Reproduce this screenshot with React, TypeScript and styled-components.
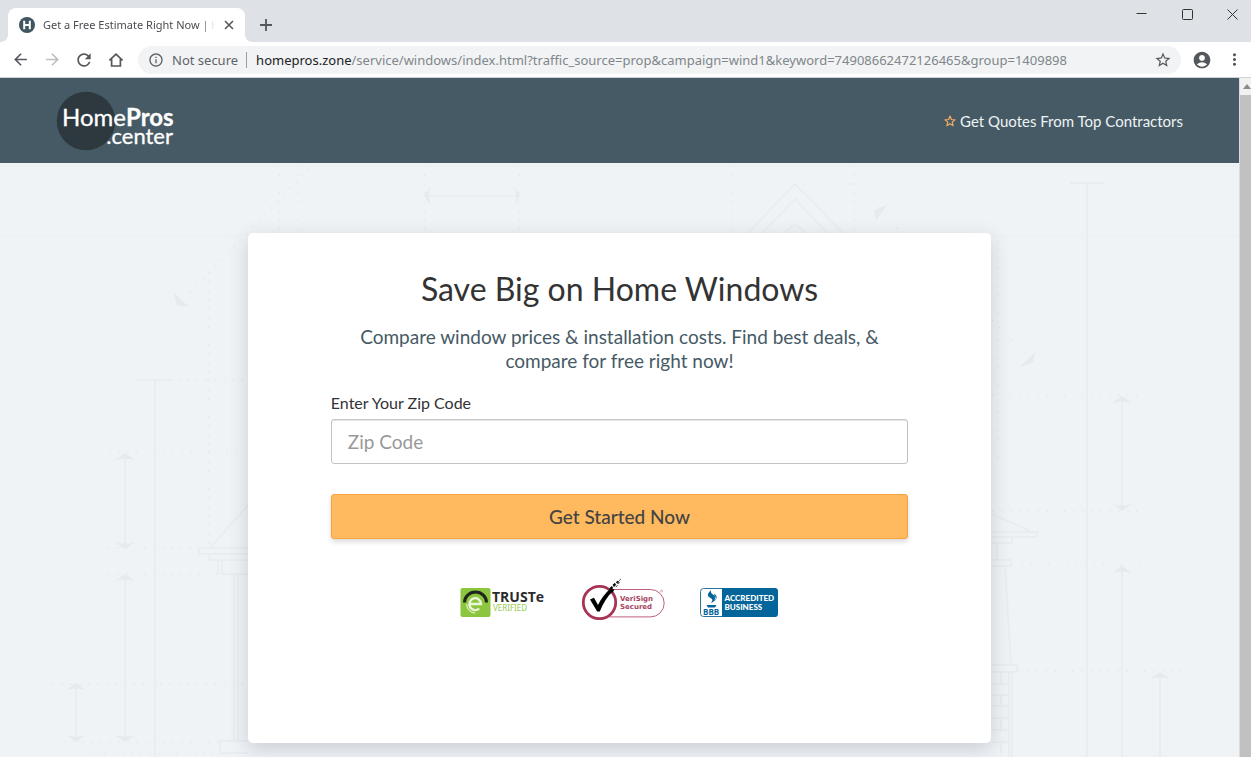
import React from "react";
import styled, { createGlobalStyle, css } from "styled-components";
import {
  MdArrowBack,
  MdArrowForward,
  MdRefresh,
  MdInfoOutline,
  MdStarBorder,
  MdAccountCircle,
  MdMoreVert,
} from "react-icons/md";

const uiFont = `"Noto Sans", "Open Sans", sans-serif`;
const siteFont = `Lato, "Open Sans", sans-serif`;

const GlobalStyle = createGlobalStyle`
  *, *::before, *::after { box-sizing: border-box; }
  body { margin: 0; background: #eff3f6; font-family: ${siteFont}; font-variant-ligatures: none; }
  h1, p { margin: 0; font-weight: 400; }
  button { font-family: inherit; cursor: pointer; }
  svg { display: block; }
`;

const BrowserWindow = styled.div`
  display: flex;
  flex-direction: column;
  height: 100vh;
  overflow: hidden;
`;

/* ---------- tab strip ---------- */

const TabStrip = styled.header`
  display: flex;
  align-items: flex-start;
  height: 42px;
  padding-left: 8px;
  background: #dee1e6;
  font-family: ${uiFont};
`;

const foot = css`
  content: "";
  position: absolute;
  bottom: 0;
  width: 8px;
  height: 8px;
`;

const Tab = styled.div`
  position: relative;
  display: flex;
  align-items: center;
  width: 237px;
  height: 34px;
  margin-top: 8px;
  padding: 0 8px 0 11px;
  border-radius: 8px 8px 0 0;
  background: #fff;

  &::before {
    ${foot}
    left: -8px;
    background: radial-gradient(circle at 0 0, transparent 8px, #fff 8px);
  }
  &::after {
    ${foot}
    right: -8px;
    background: radial-gradient(circle at 100% 0, transparent 8px, #fff 8px);
  }
`;

const TabTitle = styled.span`
  flex: 1;
  margin: 0 6px 0 8px;
  overflow: hidden;
  white-space: nowrap;
  font-size: 11px;
  line-height: 16px;
  color: #4a4d51;
  mask-image: linear-gradient(to right, #000 92%, transparent);
`;

const IconButton = styled.button<{ $w?: number; $h?: number; $faded?: boolean }>`
  display: flex;
  flex: none;
  align-items: center;
  justify-content: center;
  width: ${(p) => p.$w ?? 32}px;
  height: ${(p) => p.$h ?? 36}px;
  padding: 0;
  border: 0;
  background: none;
  color: ${(p) => (p.$faded ? "#bcbec1" : "#54575b")};
`;

const WindowControls = styled.div`
  display: flex;
  margin-left: auto;
`;

/* ---------- address row ---------- */

const Toolbar = styled.nav`
  display: flex;
  align-items: center;
  height: 36px;
  padding: 0 1px 0 4px;
  border-bottom: 1px solid #ccd2d6;
  background: #fff;
  font-family: ${uiFont};
`;

const AddressBar = styled.div`
  display: flex;
  flex: 1;
  align-items: center;
  min-width: 0;
  height: 28px;
  margin: 0 5px 0 6px;
  padding: 0 2px 0 10px;
  border-radius: 14px;
  background: #f1f3f4;
  color: #5f6368;
  font-size: 13px;
  line-height: 20px;
`;

const Security = styled.span`
  margin-left: 8px;
  padding-right: 8px;
  white-space: nowrap;
`;

const Divider = styled.span`
  width: 1px;
  height: 16px;
  margin-right: 9px;
  background: #9a9da1;
`;

const Url = styled.div`
  flex: 1;
  min-width: 0;
  overflow: hidden;
  white-space: nowrap;
  color: #80868b;

  b {
    font-weight: 400;
    color: #202124;
  }
`;

/* ---------- page ---------- */

const Viewport = styled.div`
  display: flex;
  flex: 1;
  min-height: 0;
`;

const Page = styled.div`
  display: flex;
  flex: 1;
  flex-direction: column;
  min-width: 0;
  overflow: hidden;
`;

const Scrollbar = styled.div`
  display: flex;
  flex: none;
  flex-direction: column;
  width: 12px;
  border-left: 1px solid #dcdcdc;
  background: #f1f1f1;
`;

const ScrollUp = styled.div`
  display: flex;
  align-items: center;
  justify-content: flex-end;
  height: 17px;
`;

const ScrollThumb = styled.div`
  flex: 1;
  background: #c1c1c1;
`;

const SiteHeader = styled.header`
  display: flex;
  flex: none;
  align-items: center;
  justify-content: space-between;
  height: 85px;
  padding: 0 56px;
  background: #465a65;
`;

const Tagline = styled.p`
  display: flex;
  align-items: center;
  gap: 4px;
  color: #eef3f5;
  font-size: 15px;
  line-height: 24px;
`;

const Hero = styled.main`
  position: relative;
  flex: 1;
  padding-top: 70px;
  background: #eff3f6;
`;

const Blueprint = styled.svg`
  position: absolute;
  inset: 0;
  width: 100%;
  height: 100%;
`;

const Card = styled.section`
  position: relative;
  display: flex;
  flex-direction: column;
  align-items: center;
  width: 60%;
  min-height: 510px;
  margin: 0 auto;
  padding: 36px 83px 40px;
  border-radius: 5px;
  background: #fff;
  box-shadow: 0 6px 20px rgba(50, 60, 80, 0.2);
`;

const Title = styled.h1`
  color: #333;
  font-size: 32px;
  line-height: 40px;
`;

const Lead = styled.p`
  max-width: 540px;
  margin-top: 16px;
  color: #465a65;
  font-size: 19px;
  line-height: 24px;
  text-align: center;
`;

const ZipForm = styled.form`
  display: flex;
  flex-direction: column;
  width: 100%;
  margin-top: 20px;
`;

const Label = styled.label`
  color: #333;
  font-size: 16px;
  line-height: 20px;
`;

const ZipInput = styled.input`
  height: 45px;
  margin-top: 6px;
  padding: 0 16px;
  border: 1px solid #c4c4c4;
  border-radius: 3px;
  background: #fff;
  box-shadow: inset 0 1px 1px rgba(0, 0, 0, 0.1);
  color: #333;
  font-family: inherit;
  font-size: 19px;

  &::placeholder {
    color: #999;
    opacity: 1;
  }
`;

const SubmitButton = styled.button`
  height: 45px;
  margin-top: 30px;
  border: 1px solid #f6a43c;
  border-radius: 3px;
  background: #ffb95e;
  box-shadow: 0 3px 5px rgba(0, 0, 0, 0.14);
  color: #444;
  font-size: 19px;
  font-weight: 500;
`;

const Badges = styled.div`
  display: flex;
  gap: 35px;
  margin-top: 39px;
`;

/* ---------- drawings ---------- */

const HomeIcon = () => (
  <svg width="16" height="16" viewBox="0 0 16 16" fill="none" stroke="currentColor" strokeWidth="1.7">
    <path d="M1.4 8.3 8 2.1l6.6 6.2M3.6 7v7h8.8V7" />
  </svg>
);

const Favicon = () => (
  <svg width="16" height="16" viewBox="0 0 16 16" aria-hidden="true">
    <circle cx="8" cy="8" r="8" fill="#3f5560" />
    <path d="M5.2 3.8v8.4M10.8 3.8v8.4M5.2 8h5.6" stroke="#fff" strokeWidth="2" fill="none" />
  </svg>
);

const Logo = () => (
  <svg width="120" height="60" viewBox="0 0 120 60" role="img" aria-label="HomePros.center">
    <circle cx="30" cy="30" r="29.3" fill="#2d393f" />
    <g fill="#fff" fontFamily="Lato, sans-serif">
      <text x="6" y="35" fontSize="24" stroke="#fff" strokeWidth=".3">
        Home<tspan fontWeight="700">Pros</tspan>
      </text>
      <text x="117" y="53" fontSize="22" textAnchor="end" stroke="#fff" strokeWidth=".3">.center</text>
    </g>
  </svg>
);

const SmallStar = () => (
  <svg width="12" height="12" viewBox="0 0 12 12" fill="none" stroke="#f2ae62" strokeWidth="1.2" strokeLinejoin="round">
    <path d="m6 1.1 1.4 3.4 3.6.3-2.8 2.3.9 3.6L6 8.8l-3.1 1.9.9-3.6L1 4.8l3.6-.3Z" />
  </svg>
);

const TrusteBadge = () => (
  <svg width="86" height="42" viewBox="0 0 86 42" role="img" aria-label="TRUSTe Verified">
    <rect x="0.5" y="10" width="30" height="29" rx="2" fill="#8cc63f" />
    <path d="M4.5 24.5a11 10.500 0 0 1 22 0" fill="none" stroke="#20261c" strokeWidth="3" />
    <path d="M10.500 26h10.500a5.800 6 0 1 0-1.800 4.500" fill="none" stroke="#e9f6da" strokeWidth="2.400" />
    <path d="M6.500 26c.5 5 4 8.500 8.500 9" fill="none" stroke="#d6edb8" strokeWidth="1.300" />
    <text x="32" y="24" fontFamily="Open Sans, sans-serif" fontWeight="700" fontSize="14" fill="#2b2b2b">TRUSTe</text>
    <text x="33" y="33" fontFamily="Noto Sans, sans-serif" fontSize="8" fill="#98ca55">VERIFIED</text>
  </svg>
);

const VerisignBadge = () => (
  <svg width="84" height="42" viewBox="0 0 84 42" role="img" aria-label="VeriSign Secured">
    <path d="M31 11.500H69.500a13.700 13.700 0 0 1 0 27.400H29" fill="#fff" stroke="#c0607a" strokeWidth="1" />
    <circle cx="18.500" cy="24.500" r="16.200" fill="#fff" stroke="#a73454" strokeWidth="2.800" />
    <path d="M9 21.500l4-1.800 4 7.300c3-6 7-12 12.500-16.500l2.500 2.500c-6 6-10 12.500-13.200 20.500h-2.600Z" fill="#000" />
    <path d="M28.500 11l2-2.500 1.200.8-.8 1.800 2 .6-1.500 2.500-2.500-.8ZM32 6.800l1.800-1.500.8 1.500-1.500 1.800ZM35.500 4l1.500-1 .5 1.300-1.500 1ZM34.800 8.800l1.800-1.300M37.200 5.800l1.500-1.300M38.300 2.500l1.500-1.300" fill="#000" stroke="#000" strokeWidth=".8" />
    <g fontFamily="DejaVu Sans, sans-serif" fontWeight="700" fontSize="7" fill="#a8445f">
      <text x="39" y="23">VeriSign</text>
      <text x="39" y="31">Secured</text>
    </g>
    <circle cx="80.500" cy="13" r="1" fill="none" stroke="#c0607a" strokeWidth=".5" />
  </svg>
);

const BbbBadge = () => (
  <svg width="78" height="42" viewBox="0 0 78 42" role="img" aria-label="BBB Accredited Business">
    <rect x="0.500" y="10.500" width="77" height="28" rx="3" fill="#fff" stroke="#29739a" />
    <path d="M22 10h52.500a3.500 3.500 0 0 1 3.500 3.500v22a3.500 3.500 0 0 1-3.500 3.500H22Z" fill="#04659b" />
    <path d="M11 12c-4 4-4 6-.5 8 2 1 2.500 2.500.5 5 6-3 6-6 2-8.500-2-1.300-2.500-2.500-2-4.500ZM14 15.500c3 2 4 4.500.5 7.500.5-2.500 1-4-.5-7.500ZM6.500 27h10l-1.500 2.500H8Z" fill="#04659b" />
    <text x="3" y="37" fontFamily="Open Sans, sans-serif" fontWeight="700" fontSize="8" fill="#04659b">BBB</text>
    <g fontFamily="Lato, sans-serif" fontWeight="900" fontSize="8" fill="#fff">
      <text x="24.500" y="23">ACCREDITED</text>
      <text x="24.500" y="32">BUSINESS</text>
    </g>
  </svg>
);

const arrowUp = (x: number, y: number) => `M${x} ${y}l10 7q-10-3-20 0Z`;
const arrowDown = (x: number, y: number) => `M${x} ${y}l10-7q-10 3-20 0Z`;

const BlueprintDrawing = () => (
  <Blueprint viewBox="0 163 1239 594" preserveAspectRatio="xMidYMin slice" aria-hidden="true">
    <g fill="none" stroke="#e8ecef" strokeWidth="1.500">
      <path d="M137 380h36M155 380V757M125 458V545M125 578V738M76 688V735M1070 183h35M1087 183V757M1122 402V508M1122 570V757M1160 677V757M426 196h92" />
      <path d="M211 547 248 505M248 548H199v6h49M209 554v6h39M218 560v14M222 560v14h26M234 575V740M238 575V740M248 741H220v12h28" />
      <path d="M992 514 1030 531M992 532h46l-2 5h-44M992 543h20v-6M997 543v17M992 560h19v6h-19M1005 567l6 98M992 665h25v7h-25M1009 672v85M1012 672v85M992 684h19M992 695h19M992 706h19M992 718h19M992 730h19M992 742h19M1001 673v11M1001 695v11M1001 718v12M1001 742v12" />
      <path d="M748 233 795 184l48 49M762 233l33-34 32 34M784 233l11-9 11 9" />
    </g>
    <g fill="none" stroke="#e7ebee" strokeWidth="1.500" strokeDasharray="2 7">
      <path d="M209 272V545M178 380h70M109 451h139M108 548h92M108 574h110M52 684h195M55 742h170M95 754h130M190 293 312 165M279 165v68M298 165v68M425 165v68M519 165v68M733 165v68M854 165v68" />
      <path d="M804 184h260M878 207l22 24M998 240V458M992 320l33 34M992 395h148M992 511h148M1012 565h130M1018 671h167" />
    </g>
    <g fill="none" stroke="#eceff2">
      <path d="M0 236h248M992 236h247M0 166h1239" />
    </g>
    <g fill="#e6eaed">
      <path d={[arrowUp(125, 453), arrowDown(125, 549), arrowUp(125, 574), arrowDown(125, 742), arrowUp(76, 683), arrowDown(76, 742), arrowUp(1122, 396), arrowDown(1122, 511), arrowUp(1122, 566), arrowUp(1160, 672)].join("")} />
      <path d="M173 292l16 15-12-2ZM1036 351l-3 11-13 5ZM887 205l-11 15-2-10ZM424 196l7-10q-4 10 0 20ZM520 196l-6-10q4 10 0 20Z" />
    </g>
  </Blueprint>
);

export default function App() {
  return (
    <BrowserWindow>
      <GlobalStyle />
      <TabStrip>
        <Tab>
          <Favicon />
          <TabTitle>Get a Free Estimate Right Now | H</TabTitle>
          <IconButton $w={16} $h={16} aria-label="Close tab">
            <svg width="10" height="10" viewBox="0 0 10 10" stroke="currentColor" strokeWidth="1.600">
              <path d="m1 1 8 8M9 1 1 9" />
            </svg>
          </IconButton>
        </Tab>
        <IconButton $w={42} $h={50} aria-label="New tab">
          <svg width="12" height="12" viewBox="0 0 12 12" stroke="currentColor" strokeWidth="1.800">
            <path d="M6 0v12M0 6h12" />
          </svg>
        </IconButton>
        <WindowControls>
          <IconButton $w={37} $h={29} aria-label="Minimize">
            <svg width="11" height="11" viewBox="0 0 11 11" stroke="#333">
              <path d="M.5 4.500h10" />
            </svg>
          </IconButton>
          <IconButton $w={54} $h={29} aria-label="Maximize">
            <svg width="11" height="11" viewBox="0 0 11 11" stroke="#333" fill="none">
              <rect x=".5" y=".5" width="10" height="10" rx="1" />
            </svg>
          </IconButton>
          <IconButton $w={37} $h={29} aria-label="Close">
            <svg width="11" height="11" viewBox="0 0 11 11" stroke="#333">
              <path d="m.5.5 10 10M10.500.5l-10 10" />
            </svg>
          </IconButton>
        </WindowControls>
      </TabStrip>

      <Toolbar>
        <IconButton aria-label="Back"><MdArrowBack size={19} /></IconButton>
        <IconButton $faded aria-label="Forward"><MdArrowForward size={19} /></IconButton>
        <IconButton aria-label="Reload"><MdRefresh size={20} /></IconButton>
        <IconButton aria-label="Home"><HomeIcon /></IconButton>
        <AddressBar>
          <MdInfoOutline size={16} />
          <Security>Not secure</Security>
          <Divider />
          <Url role="textbox" aria-label="Address">
            <b>homepros.zone</b>/service/windows/index.html?traffic_source=prop&amp;campaign=wind1&amp;keyword=74908662472126465&amp;group=1409898
          </Url>
          <IconButton $h={28} aria-label="Bookmark"><MdStarBorder size={18} /></IconButton>
        </AddressBar>
        <IconButton aria-label="Profile"><MdAccountCircle size={20} /></IconButton>
        <IconButton aria-label="Menu"><MdMoreVert size={19} /></IconButton>
      </Toolbar>

      <Viewport>
        <Page>
          <SiteHeader>
            <Logo />
            <Tagline>
              <SmallStar />
              Get Quotes From Top Contractors
            </Tagline>
          </SiteHeader>
          <Hero>
            <BlueprintDrawing />
            <Card>
              <Title>Save Big on Home Windows</Title>
              <Lead>Compare window prices &amp; installation costs. Find best deals, &amp; compare for free right now!</Lead>
              <ZipForm onSubmit={(e) => e.preventDefault()}>
                <Label htmlFor="zip">Enter Your Zip Code</Label>
                <ZipInput id="zip" type="text" placeholder="Zip Code" />
                <SubmitButton type="submit">Get Started Now</SubmitButton>
              </ZipForm>
              <Badges>
                <TrusteBadge />
                <VerisignBadge />
                <BbbBadge />
              </Badges>
            </Card>
          </Hero>
        </Page>
        <Scrollbar aria-hidden="true">
          <ScrollUp>
            <svg width="8" height="5" viewBox="0 0 8 5" fill="#8a8a8a">
              <path d="M4 0l4 5H0Z" />
            </svg>
          </ScrollUp>
          <ScrollThumb />
        </Scrollbar>
      </Viewport>
    </BrowserWindow>
  );
}
